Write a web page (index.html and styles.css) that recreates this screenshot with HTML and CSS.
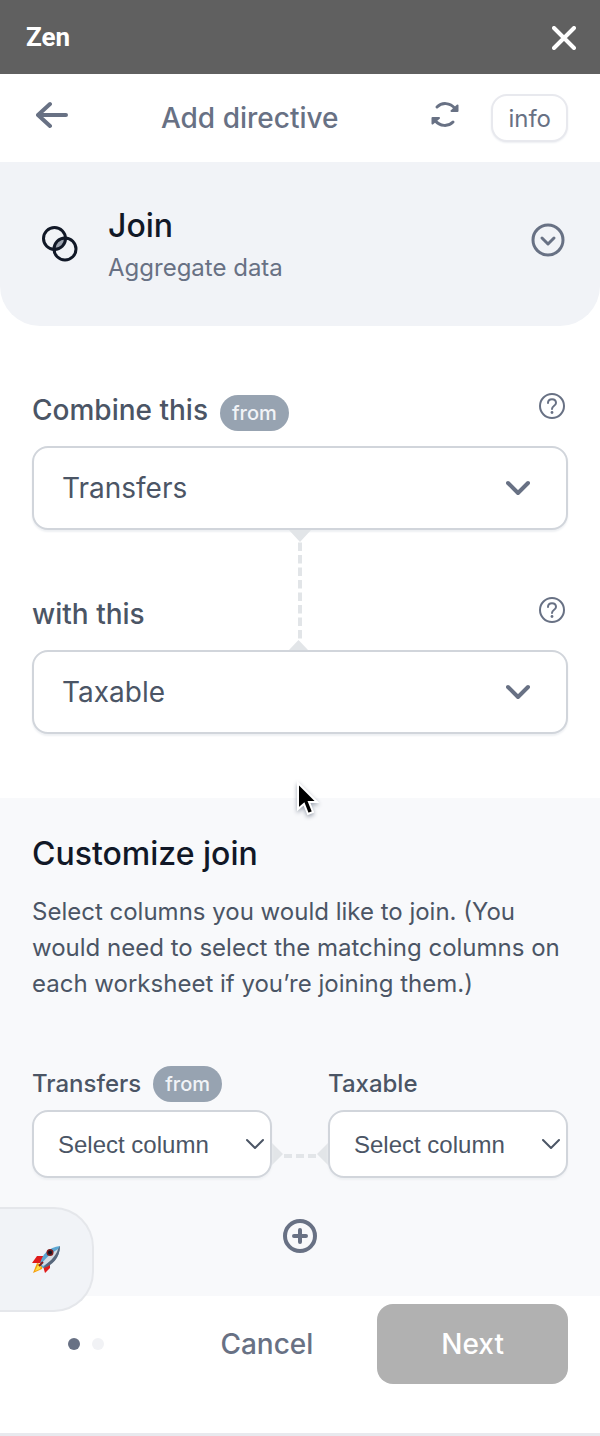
FILE: index.html
```html
<!DOCTYPE html>
<html lang="en">
<head>
<meta charset="utf-8">
<meta name="viewport" content="width=device-width, initial-scale=1">
<title>Zen</title>
<link rel="stylesheet" href="styles.css">
</head>
<body>
<header class="titlebar">
  <h1 class="brand">Zen</h1>
  <button class="icon-button" type="button" aria-label="Close">
    <svg width="24" height="24" viewBox="0 0 24 24" fill="none" stroke="currentColor" stroke-width="4" stroke-linecap="round"><path d="M2 2 22 22M22 2 2 22"/></svg>
  </button>
</header>

<nav class="toolbar">
  <button class="icon-button" type="button" aria-label="Back">
    <svg width="32" height="28" viewBox="0 0 32 28" fill="none" stroke="currentColor" stroke-width="4" stroke-linecap="round" stroke-linejoin="round"><path d="M30 14H2M14 3 2 14 14 25"/></svg>
  </button>
  <h2 class="toolbar-title">Add directive</h2>
  <div class="toolbar-actions">
    <button class="icon-button" type="button" aria-label="Refresh">
      <svg width="28" height="28" viewBox="0 0 28 28" fill="none" stroke="currentColor" stroke-width="3" stroke-linecap="round" stroke-linejoin="round"><path d="M6 6C11 1 19 1.500 24 7.500M22 21C17 26 9 25.500 4 19.500"/><path d="M26.500 4.500V10H20.500ZM1.500 22.500V17H8Z" fill="currentColor" stroke-width="2"/></svg>
    </button>
    <button class="info-button" type="button">info</button>
  </div>
</nav>

<section class="directive">
  <svg class="directive-icon" width="38" height="38" viewBox="0 0 38 38" fill="none" stroke="#111827" stroke-width="3"><path d="M13 24A11 11 0 0 1 24.500 13 11 11 0 0 1 13 24Z" fill="#9ca3af" stroke="none"/><circle cx="13.500" cy="13.500" r="11"/><circle cx="24" cy="24" r="11"/></svg>
  <div class="directive-text">
    <h2 class="heading">Join</h2>
    <p class="directive-note">Aggregate data</p>
  </div>
  <button class="icon-button" type="button" aria-label="Choose directive">
    <svg width="34" height="34" viewBox="0 0 34 34" fill="none" stroke="currentColor" stroke-width="3" stroke-linecap="round" stroke-linejoin="round"><circle cx="17" cy="17" r="15"/><path d="M11 15 17 21 23 15"/></svg>
  </button>
</section>

<main>
  <section class="sources">
    <div class="field">
      <div class="field-head">
        <label class="field-label" for="source">Combine this</label>
        <span class="badge">from</span>
        <button class="icon-button help" type="button" aria-label="Help with source">
          <svg width="28" height="28" viewBox="0 0 28 28" fill="none" stroke="currentColor" stroke-width="2" stroke-linecap="round"><circle cx="14" cy="14" r="12"/><path d="M10 11C10 6 18 6 18 11 18 14 14 13.500 14 17"/><circle cx="14" cy="20.500" r="1.400" fill="currentColor" stroke="none"/></svg>
        </button>
      </div>
      <div class="select-wrap">
        <select class="select select-large" id="source"><option>Transfers</option></select>
        <svg class="chevron chevron-large" viewBox="0 0 24 16" fill="none" stroke="currentColor" stroke-width="4" stroke-linecap="round" stroke-linejoin="round"><path d="M2 3 12 13 22 3"/></svg>
      </div>
    </div>
    <div class="field field-linked">
      <svg class="link-vertical" width="22" height="120" viewBox="0 0 22 120" aria-hidden="true"><g fill="#e2e5e8"><path d="M0 0H22L11 12ZM0 120 9.500 110 19 120Z"/></g><path d="M11 12.500V110" stroke="#e2e5e8" stroke-width="4" stroke-dasharray="8.500 4"/></svg>
      <div class="field-head">
        <label class="field-label" for="target">with this</label>
        <button class="icon-button help" type="button" aria-label="Help with target">
          <svg width="28" height="28" viewBox="0 0 28 28" fill="none" stroke="currentColor" stroke-width="2" stroke-linecap="round"><circle cx="14" cy="14" r="12"/><path d="M10 11C10 6 18 6 18 11 18 14 14 13.500 14 17"/><circle cx="14" cy="20.500" r="1.400" fill="currentColor" stroke="none"/></svg>
        </button>
      </div>
      <div class="select-wrap">
        <select class="select select-large" id="target"><option>Taxable</option></select>
        <svg class="chevron chevron-large" viewBox="0 0 24 16" fill="none" stroke="currentColor" stroke-width="4" stroke-linecap="round" stroke-linejoin="round"><path d="M2 3 12 13 22 3"/></svg>
      </div>
    </div>
  </section>

  <section class="customize">
    <svg class="pointer" width="26" height="38" viewBox="0 0 26 38" aria-hidden="true"><path d="M3 3V29L9 24 13 34 18 32 14 22H22Z" fill="#000" stroke="#fff" stroke-width="2"/></svg>
    <h2 class="heading">Customize join</h2>
    <p class="customize-text">Select columns you would like to join. (You would need to select the matching columns on each worksheet if you’re joining them.)</p>
    <div class="columns">
      <div class="column">
        <div class="column-head">
          <label class="column-label" for="left-column">Transfers</label>
          <span class="badge">from</span>
        </div>
        <div class="select-wrap">
          <select class="select select-small" id="left-column"><option>Select column</option></select>
          <svg class="chevron chevron-small" viewBox="0 0 18 12" fill="none" stroke="currentColor" stroke-width="2" stroke-linecap="round" stroke-linejoin="round"><path d="M1 2 9 10 17 2"/></svg>
        </div>
      </div>
      <svg class="link-horizontal" width="56" height="22" viewBox="0 0 56 22" aria-hidden="true"><g fill="#e2e5e8"><path d="M0 0V22L11 11ZM56 0V22L45 11Z"/></g><path d="M12 13H45" stroke="#e2e5e8" stroke-width="4" stroke-dasharray="8 4"/></svg>
      <div class="column">
        <div class="column-head">
          <label class="column-label" for="right-column">Taxable</label>
        </div>
        <div class="select-wrap">
          <select class="select select-small" id="right-column"><option>Select column</option></select>
          <svg class="chevron chevron-small" viewBox="0 0 18 12" fill="none" stroke="currentColor" stroke-width="2" stroke-linecap="round" stroke-linejoin="round"><path d="M1 2 9 10 17 2"/></svg>
        </div>
      </div>
    </div>
    <button class="icon-button add" type="button" aria-label="Add column pair">
      <svg width="34" height="34" viewBox="0 0 34 34" fill="none" stroke="currentColor" stroke-width="4" stroke-linecap="round"><circle cx="17" cy="17" r="15"/><path d="M17 11V23M11 17H23"/></svg>
    </button>
    <button class="launcher" type="button" aria-label="Get started">
      <svg width="30" height="30" viewBox="0 0 30 30"><path d="M12 11 5 11 0 18 9 18ZM18 18 18 23 13 28 11 21Z" fill="#e01b1b"/><path d="M5 18 11 20 10 24 1 28Z" fill="#f59e0b"/><path d="M6 20 9 21 8 24 3 26Z" fill="#fde047"/><path d="M8 20C9 10 17 2 28 1 28 12 20 20 11 23Z" fill="#5ba6d2"/><path d="M11 23C17 16 23 10 28 1 28 13 20 21 11 23Z" fill="#58677b"/><path d="M9 19C14 13 19 8 26 4 24 12 16 18 11 21Z" fill="#d6dce3"/><circle cx="18" cy="7.500" r="3.500" fill="#7f1d1d"/><circle cx="18" cy="7.500" r="2" fill="#111827"/><path d="M7 21 11 17" stroke="#7f1d1d" stroke-width="2"/></svg>
    </button>
  </section>
</main>

<footer class="footer">
  <div class="steps" role="img" aria-label="Step 1 of 2"><span class="step step-current"></span><span class="step"></span></div>
  <button class="cancel" type="button">Cancel</button>
  <button class="next" type="button">Next</button>
</footer>
</body>
</html>
```
FILE: styles.css
```css
* {
  box-sizing: border-box;
}

body {
  margin: 0;
  min-height: 100vh;
  display: flex;
  flex-direction: column;
  background: #fff;
  border-bottom: 3px solid #e8e9ee;
  font-family: Inter, "Liberation Sans", sans-serif;
  font-size: 24px;
  color: #4b5565;
}

h1, h2, p {
  margin: 0;
}

button, select {
  margin: 0;
  font: inherit;
  cursor: pointer;
}

svg {
  display: block;
}

.icon-button {
  padding: 0;
  border: 0;
  background: none;
  color: #687184;
}

.titlebar {
  display: flex;
  align-items: center;
  justify-content: space-between;
  height: 74px;
  padding: 0 24px 0 26px;
  background: #606060;
}

.titlebar .icon-button {
  padding-top: 2px;
  color: #fff;
}

.brand {
  font-family: Roboto, sans-serif;
  font-size: 26px;
  font-weight: 700;
  line-height: 32px;
  color: #fff;
}

.toolbar {
  display: flex;
  align-items: center;
  justify-content: space-between;
  height: 88px;
  padding: 0 32px 0 36px;
}

.toolbar > .icon-button {
  margin-bottom: 6px;
}

.toolbar-title {
  font-size: 28px;
  font-weight: 500;
  line-height: 36px;
  color: #687184;
}

.toolbar-actions {
  display: flex;
  align-items: center;
  gap: 32px;
}

.toolbar-actions .icon-button {
  margin-bottom: 6px;
}

.info-button {
  height: 48px;
  padding: 0 15px;
  border: 2px solid #e8e9ee;
  border-radius: 16px;
  background: #fff;
  box-shadow: 0 1px 2px #eceef2;
  color: #687184;
}

.directive {
  display: flex;
  align-items: center;
  height: 164px;
  padding: 0 35px 0 41px;
  border-radius: 0 0 40px 40px;
  background: #f1f3f7;
}

.directive-text {
  flex: 1;
  margin-left: 29px;
}

.directive > .icon-button {
  margin-bottom: 8px;
}

.heading {
  font-size: 32px;
  font-weight: 500;
  line-height: 48px;
  color: #111827;
}

.directive-note {
  line-height: 36px;
  color: #687184;
}

.sources {
  padding: 64px 32px;
}

.field-linked {
  position: relative;
  margin-top: 64px;
}

.field-head {
  display: flex;
  align-items: center;
  gap: 12px;
  height: 40px;
  margin-bottom: 16px;
}

.field-head .badge {
  margin-top: 6px;
}

.field-label {
  font-size: 28px;
  font-weight: 500;
  line-height: 40px;
}

.badge {
  height: 36px;
  padding: 0 12px;
  border-radius: 18px;
  background: #97a3b1;
  font-size: 20px;
  font-weight: 500;
  line-height: 36px;
  color: #f1f3f7;
}

.help {
  margin: 0 2px 8px auto;
}

.select-wrap {
  position: relative;
}

.select {
  display: block;
  width: 100%;
  appearance: none;
  border: 2px solid #d1d5db;
  border-radius: 16px;
  background: #fff;
  box-shadow: 0 2px 2px #eef0f3;
  color: #4b5565;
}

.select-large {
  height: 84px;
  padding: 0 64px 0 28px;
  font-size: 28px;
}

.select-small {
  height: 68px;
  padding: 0 32px 0 24px;
  font-family: "Liberation Sans", sans-serif;
  font-size: 24px;
}

.chevron {
  position: absolute;
  top: 50%;
  transform: translateY(-50%);
  pointer-events: none;
}

.chevron-large {
  right: 38px;
  width: 24px;
  color: #687184;
}

.chevron-small {
  right: 8px;
  width: 18px;
}

.link-vertical {
  position: absolute;
  top: -64px;
  left: 50%;
  transform: translateX(-50%);
}

.customize {
  position: relative;
  padding: 32px 32px 43px;
  background: #f8f9fb;
}

.pointer {
  position: absolute;
  top: -18px;
  left: 50%;
  margin-left: -5px;
  filter: drop-shadow(0 2px 2px #9ca3af);
}

.customize-text {
  margin-top: 16px;
  line-height: 36px;
}

.columns {
  display: flex;
  align-items: flex-end;
  margin-top: 64px;
}

.column {
  flex: 1;
}

.column-head {
  display: flex;
  align-items: center;
  gap: 12px;
  height: 36px;
  margin-bottom: 8px;
}

.column-label {
  font-weight: 500;
  line-height: 36px;
}

.link-horizontal {
  margin-bottom: 13px;
}

.add {
  display: block;
  margin: 41px auto 0;
}

.launcher {
  position: absolute;
  left: 0;
  bottom: -16px;
  display: flex;
  align-items: center;
  width: 94px;
  height: 105px;
  padding: 0 0 0 32px;
  border: 2px solid #e5e7eb;
  border-left: 0;
  border-radius: 0 40px 40px 0;
  background: #f1f3f7;
}

.footer {
  display: flex;
  align-items: center;
  padding: 8px 32px 48px;
}

.steps {
  display: flex;
  gap: 12px;
  padding-left: 36px;
}

.step {
  width: 12px;
  height: 12px;
  border-radius: 50%;
  background: #f1f2f5;
}

.step-current {
  background: #687184;
}

.cancel,
.next {
  height: 80px;
  padding: 0 64px;
  border: 0;
  border-radius: 16px;
  background: none;
  font-size: 28px;
  font-weight: 500;
  color: #687184;
}

.cancel {
  margin-left: auto;
}

.next {
  background: #b1b1b1;
  color: #fff;
}
```
